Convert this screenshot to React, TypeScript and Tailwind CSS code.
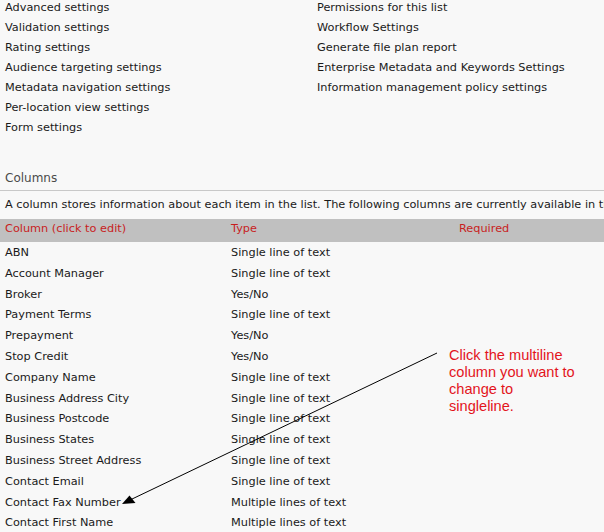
const leftLinks = [
  "Advanced settings",
  "Validation settings",
  "Rating settings",
  "Audience targeting settings",
  "Metadata navigation settings",
  "Per-location view settings",
  "Form settings",
];

const rightLinks = [
  "Permissions for this list",
  "Workflow Settings",
  "Generate file plan report",
  "Enterprise Metadata and Keywords Settings",
  "Information management policy settings",
];

const columns: [string, string][] = [
  ["ABN", "Single line of text"],
  ["Account Manager", "Single line of text"],
  ["Broker", "Yes/No"],
  ["Payment Terms", "Single line of text"],
  ["Prepayment", "Yes/No"],
  ["Stop Credit", "Yes/No"],
  ["Company Name", "Single line of text"],
  ["Business Address City", "Single line of text"],
  ["Business Postcode", "Single line of text"],
  ["Business States", "Single line of text"],
  ["Business Street Address", "Single line of text"],
  ["Contact Email", "Single line of text"],
  ["Contact Fax Number", "Multiple lines of text"],
  ["Contact First Name", "Multiple lines of text"],
];

function Arrow() {
  return (
    <svg className="absolute left-0 top-0 pointer-events-none" width="604" height="532" viewBox="0 0 604 532">
      <line x1="437" y1="353" x2="130" y2="500" stroke="#000" strokeWidth="1" />
      <polygon points="122,504 129.5,495.5 135.5,503" fill="#000" />
    </svg>
  );
}

export default function App() {
  return (
    <div
      className="relative w-[604px] h-[532px] overflow-hidden bg-[#f8f8f8] text-[#1a1a1a] text-[11.3px]"
      style={{ fontFamily: '"DejaVu Sans", Verdana, sans-serif' }}
    >
      <div className="flex pl-[5px] -mt-[2px]">
        <div className="w-[312px] flex flex-col">
          {leftLinks.map((l) => (
            <div key={l} className="h-[20px] leading-[20px] whitespace-nowrap">{l}</div>
          ))}
        </div>
        <div className="flex flex-col">
          {rightLinks.map((l) => (
            <div key={l} className="h-[20px] leading-[20px] whitespace-nowrap">{l}</div>
          ))}
        </div>
      </div>

      <div className="mt-[32px] border-b border-[#c8c8c8] pl-[5px] pb-[4px]">
        <div className="text-[12px] leading-[16px] text-[#4a4a4a]">Columns</div>
      </div>
      <div className="mt-[4px] pl-[5px] pr-[4px] h-[20px] leading-[20px] whitespace-nowrap overflow-hidden">
        A column stores information about each item in the list. The following columns are currently available in this list:
      </div>

      <div className="mt-[4px] h-[23px] bg-[#c0c0c0] flex pl-[5px] leading-[20px] text-[#c81e1e]">
        <div className="w-[226px]">Column (click to edit)</div>
        <div className="w-[228px]">Type</div>
        <div>Required</div>
      </div>
      <div className="mt-[1px] flex flex-col">
        {columns.map(([name, type]) => (
          <div key={name} className="flex pl-[5px] h-[20.8px] leading-[20.8px] whitespace-nowrap">
            <div className="w-[226px]">{name}</div>
            <div className="w-[228px]">{type}</div>
          </div>
        ))}
      </div>

      <Arrow />
      <div
        className="absolute left-[449px] top-[347px] text-[14.6px] leading-[17px] text-[#e3141c]"
        style={{ fontFamily: '"Liberation Sans", Arial, sans-serif' }}
      >
        <div>Click the multiline</div>
        <div>column you want to</div>
        <div>change to</div>
        <div>singleline.</div>
      </div>
    </div>
  );
}
